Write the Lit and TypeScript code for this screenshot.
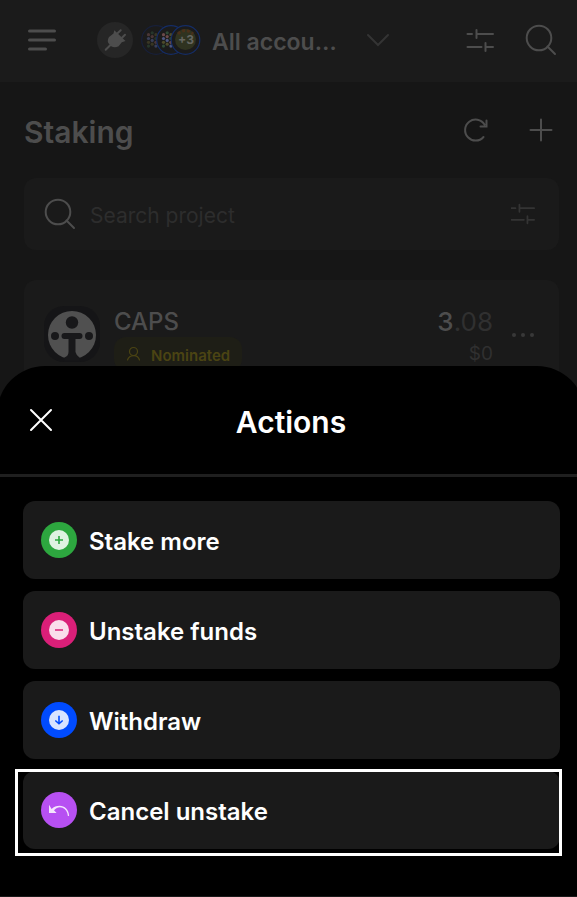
import { LitElement, html, css, svg } from "lit";
import { customElement } from "lit/decorators.js";

const sliders = svg`<path d="M1.5 7H6M11.5 7H27M1.5 20H15.5M20 20H27M10.5 3v8M19.5 16v8"/>`;
const lens = svg`<circle cx="14" cy="14" r="12.3"/><path d="M22.5 22.5L30 30"/>`;

const actions = [
  {
    label: "Stake more",
    tone: "green",
    glyph: svg`<circle class="disc" cx="18" cy="18" r="10"/><path d="M18 14v8M14 18h8"/>`,
  },
  {
    label: "Unstake funds",
    tone: "pink",
    glyph: svg`<circle class="disc" cx="18" cy="18" r="10"/><path d="M14 18h8"/>`,
  },
  {
    label: "Withdraw",
    tone: "blue",
    glyph: svg`<circle class="disc" cx="18" cy="18" r="10"/><path d="M18 13.700v8M14.300 18.500L18 21.800l3.700-3.300"/>`,
  },
  {
    label: "Cancel unstake",
    tone: "purple",
    focus: true,
    glyph: svg`<path class="disc" d="M8 12.700v8.300h7.600l-2.600-2.700c2.600-3.300 6-3.700 8.600-2.500 2.900 1.300 5 4.200 5.300 8.200h1.200c0-6.300-4.600-10.200-9.500-10.200-3 0-5.800 1.200-8 3.100z"/>`,
  },
];

@customElement("app-root")
export class AppRoot extends LitElement {
  static styles = css`
    :host {
      display: block;
      position: relative;
      min-height: 100vh;
      overflow: hidden;
      background: #161616;
      color: #4d4d4d;
      font-family: Inter, "Noto Sans", sans-serif;
    }
    * {
      box-sizing: border-box;
    }
    button {
      display: flex;
      align-items: center;
      padding: 0;
      border: 0;
      background: none;
      color: inherit;
      font: inherit;
    }
    svg {
      display: block;
      flex: none;
      fill: none;
      stroke: currentColor;
      stroke-width: 2;
      stroke-linecap: round;
    }
    h1,
    h2 {
      margin: 0;
      font-weight: 600;
    }
    .label {
      padding-top: 3px;
    }
    .top {
      display: flex;
      align-items: center;
      height: 82px;
      padding: 0 20px 2px 28px;
      background: #1b1b1b;
    }
    .menu {
      margin-right: 41px;
    }
    .plug {
      justify-content: center;
      width: 36px;
      height: 36px;
      margin-right: 8px;
      border-radius: 50%;
      background: #262626;
    }
    .account {
      gap: 11px;
      font-size: 23px;
      line-height: 32px;
      font-weight: 600;
    }
    .chevron {
      margin-left: 18px;
      color: #343434;
    }
    .tools {
      display: flex;
      align-items: center;
      gap: 30px;
      margin-left: auto;
    }
    .title {
      display: flex;
      align-items: center;
      height: 96px;
      padding: 0 24px;
    }
    .title h1 {
      flex: 1;
      font-size: 30px;
      line-height: 40px;
    }
    .title .tools {
      gap: 40px;
    }
    .search,
    .card {
      display: flex;
      margin: 0 18px 30px 24px;
      padding: 0 24px 0 20px;
      border-radius: 12px;
      background: #1a1a1a;
    }
    .search {
      align-items: center;
      gap: 14px;
      height: 72px;
    }
    .search input {
      flex: 1;
      min-width: 0;
      padding: 3px 0 0;
      border: 0;
      outline: 0;
      background: none;
      color: #4d4d4d;
      font: 400 21px/32px Inter, "Noto Sans", sans-serif;
    }
    .search input::placeholder {
      color: #2d2d2d;
      opacity: 1;
    }
    .soft {
      color: #343434;
    }
    .card {
      height: 110px;
      padding-top: 26px;
    }
    .logo {
      margin-right: 14px;
    }
    .name {
      flex: 1;
      font-size: 24px;
      line-height: 31px;
      font-weight: 500;
    }
    .badge {
      display: flex;
      align-items: center;
      gap: 10px;
      width: max-content;
      height: 34px;
      padding: 0 12px;
      border-radius: 12px;
      background: #1e1e16;
      color: #4b4413;
      font-size: 15px;
      line-height: 24px;
      font-weight: 600;
    }
    .value {
      color: #303030;
      font-size: 26px;
      line-height: 32px;
      text-align: right;
    }
    .value b {
      color: #4d4d4d;
      font-weight: 500;
    }
    .value small {
      display: block;
      font-size: 19px;
    }
    .more {
      height: 58px;
      margin-left: 18px;
      color: #383838;
    }
    .sheet {
      position: absolute;
      right: -8px;
      bottom: 1px;
      left: -3px;
      border-radius: 48px 48px 0 0;
      background: #000;
      color: #fff;
      box-shadow: 0 1px #1a1a1a;
    }
    .head {
      display: grid;
      grid-template-columns: 26px 1fr 26px;
      align-items: center;
      height: 111px;
      padding: 0 31px;
      border-bottom: 3px solid #1f1f1f;
    }
    .head h2 {
      font-size: 30px;
      line-height: 40px;
      text-align: center;
    }
    .list {
      display: grid;
      gap: 12px;
      margin: 0;
      padding: 24px 25px 47px 26px;
      list-style: none;
    }
    .item {
      position: relative;
    }
    .row {
      gap: 12px;
      width: 100%;
      height: 78px;
      padding: 0 18px;
      border-radius: 12px;
      background: #1a1a1a;
      font-size: 24px;
      line-height: 32px;
      font-weight: 600;
    }
    .focus::after {
      content: "";
      position: absolute;
      inset: -2px -2px -7px -8px;
      border: 3px solid #fff;
      pointer-events: none;
    }
    .dot {
      border-radius: 50%;
      background: currentColor;
      stroke-width: 1.6;
      stroke-linecap: butt;
    }
    .disc {
      fill: #fff;
      fill-opacity: 0.85;
      stroke: none;
    }
    .green {
      color: #2da73f;
    }
    .pink {
      color: #da1f78;
    }
    .blue {
      color: #004bff;
    }
    .purple {
      color: #b750f2;
    }
  `;

  private coin(x: number, ring: string, opacity: number) {
    const tones = ["#6b4a4a", "#4c5680", "#4d4a2a", "#2f4a36"];
    const dots = [];
    for (let c = 0; c < 3; c++)
      for (let r = 0; r < 4; r++)
        dots.push(
          svg`<circle cx=${x - 7.5 + c * 3.7} cy=${9.7 + r * 3.8 - (c % 2) * 1.9} r="1.600" stroke="none" opacity=${opacity} fill=${tones[(c * 3 + r) % 4]} />`
        );
    return svg`<circle cx=${x} cy="15" r="14.300" fill="#1b1b1b" stroke=${ring} stroke-width="1.200"/>${dots}`;
  }

  render() {
    return html`
      <header class="top">
        <button class="menu" aria-label="Menu">
          <svg width="28" height="24"><g stroke-width="3"><path d="M1.500 3H26.500M1.500 12H26.500M1.500 21H17.500" /></g></svg>
        </button>
        <button class="plug" aria-label="Connection">
          <svg width="24" height="24">
            <path d="M2.700 21.700L8 16.500M14 5.700L17.700 2.300M19 9.700L22 6.700" />
            <path fill="currentColor" stroke="none" d="M11.300 2.300L22.500 13 18.800 14.300 15.600 18.300Q12 20 8.500 18.600L5.300 15Q4 12.500 6 9L10.500 5.500z" />
          </svg>
        </button>
        <button class="account">
          <svg width="60" height="30">
            ${this.coin(15, "#18203a", 0.6)} ${this.coin(30, "#152d66", 1)}
            <circle cx="44.500" cy="15" r="14.300" fill="#1b1b1b" stroke="#152d66" stroke-width="1.200" />
            <circle cx="44.500" cy="14.500" r="10.500" fill="#2f3320" stroke="none" />
            <path d="M37 9Q44 2 52 9" stroke="#4a3019" stroke-width="3" stroke-dasharray="3 2" stroke-linecap="butt" />
            <text x="45" y="19" text-anchor="middle" fill="#666660" stroke="none" font-size="12" font-weight="700">+3</text>
          </svg>
          <span class="label">All accou…</span>
          <svg class="chevron" width="24" height="14"><path d="M2 2l10 10L22 2" /></svg>
        </button>
        <div class="tools">
          <button aria-label="Filter"><svg width="29" height="27">${sliders}</svg></button>
          <button aria-label="Search"><svg width="32" height="32">${lens}</svg></button>
        </div>
      </header>

      <main>
        <div class="title">
          <h1 class="label">Staking</h1>
          <div class="tools">
            <button aria-label="Refresh">
              <svg width="26" height="26"><path d="M20.500 20A10.500 10.500 0 1 1 21.500 7.500M23.500 3.500V9.500H17.500" /></svg>
            </button>
            <button aria-label="Add">
              <svg width="24" height="24"><path d="M12 1.500v21M1.500 12h21" /></svg>
            </button>
          </div>
        </div>
        <div class="search">
          <svg width="32" height="32">${lens}</svg>
          <input type="text" aria-label="Search project" placeholder="Search project" />
          <button class="soft" aria-label="Filter projects">
            <svg width="24" height="24" viewBox="1 0 27 27">${sliders}</svg>
          </button>
        </div>
        <section class="card">
          <svg class="logo" width="56" height="56">
            <rect width="56" height="56" rx="20" fill="#151517" stroke="none" />
            <circle cx="28" cy="29" r="24" fill="#505050" stroke="none" />
            <g fill="#18181a" stroke="none">
              <circle cx="28" cy="16.500" r="6.200" />
              <circle cx="11" cy="30" r="4" />
              <circle cx="45" cy="30" r="4" />
              <rect x="17.500" y="27" width="21" height="6" rx="3" />
              <path d="M24.500 30h7v16q1 4 4 5.500v3h-15v-3q4-1.500 4-5.500z" />
            </g>
          </svg>
          <div class="name">
            CAPS
            <div class="badge">
              <svg width="15" height="16">
                <g stroke-width="1.200">
                  <circle cx="7.500" cy="5.500" r="4" />
                  <path d="M1.500 14Q3 10 7.500 9.700T13.500 14" />
                </g>
              </svg>
              <span class="label">Nominated</span>
            </div>
          </div>
          <div class="value"><b>3</b>.08<small>$0</small></div>
          <button class="more" aria-label="More">
            <svg width="24" height="6">
              <g fill="currentColor" stroke="none">
                <circle cx="3" cy="3" r="2" /><circle cx="12" cy="3" r="2" /><circle cx="21" cy="3" r="2" />
              </g>
            </svg>
          </button>
        </section>
      </main>

      <section class="sheet" role="dialog" aria-label="Actions">
        <div class="head">
          <button aria-label="Close">
            <svg width="26" height="26"><path d="M3 3l20 20M23 3L3 23" /></svg>
          </button>
          <h2 class="label">Actions</h2>
        </div>
        <ul class="list">
          ${actions.map(
            (a) => html`<li class="item ${a.focus ? "focus" : ""}">
              <button class="row">
                <svg class="dot ${a.tone}" width="36" height="36">${a.glyph}</svg>
                <span class="label">${a.label}</span>
              </button>
            </li>`
          )}
        </ul>
      </section>
    `;
  }
}
